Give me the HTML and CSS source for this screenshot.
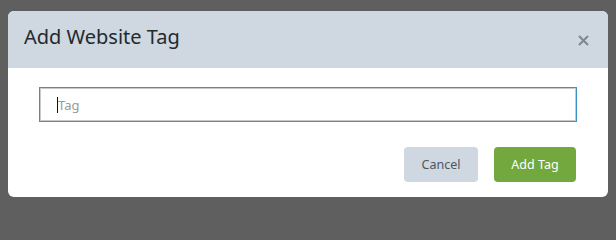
FILE: index.html
```html
<!DOCTYPE html>
<html>
<head>
<meta charset="utf-8">
<link rel="stylesheet" href="styles.css">
</head>
<body>
<div class="modal">
  <div class="modal-header">
    <h4 class="modal-title">Add Website Tag</h4>
    <button class="close" type="button" aria-label="Close">
      <svg width="11" height="11" viewBox="0 0 11 11"><path d="M1 1L10 10M10 1L1 10" stroke="#7d8691" stroke-width="2" stroke-linecap="butt"/></svg>
    </button>
  </div>
  <div class="modal-body">
    <div class="field">
      <input class="tag-input" type="text" placeholder="Tag">
      <span class="caret"></span>
    </div>
    <div class="actions">
      <button class="btn btn-cancel" type="button">Cancel</button>
      <button class="btn btn-add" type="button">Add Tag</button>
    </div>
  </div>
</div>
</body>
</html>
```
FILE: styles.css
```css
html, body {
  margin: 0;
  padding: 0;
  background: #5f5f5f;
  font-family: "Noto Sans", sans-serif;
}
body {
  padding: 11px 8px 0 8px;
}
.modal {
  width: 600px;
  height: 186px;
  background: #ffffff;
  border-radius: 6px;
  overflow: hidden;
  display: flex;
  flex-direction: column;
}
.modal-header {
  background: #cfd7e0;
  height: 57px;
  box-sizing: border-box;
  padding: 12px 19px 0 16px;
  display: flex;
  align-items: flex-start;
  justify-content: space-between;
}
.modal-title {
  margin: 0;
  font-size: 20px;
  line-height: 27px;
  font-weight: 400;
  color: #24292e;
}
.close {
  border: 0;
  background: transparent;
  padding: 0;
  margin-top: 12px;
  width: 11px;
  height: 11px;
  display: block;
}
.close svg { display: block; }
.modal-body {
  padding: 20px 32px 0 32px;
  display: flex;
  flex-direction: column;
}
.field {
  position: relative;
  width: 536px;
  height: 33px;
}
.tag-input {
  box-sizing: border-box;
  width: 536px;
  height: 33px;
  margin: 0;
  border: 1px solid #c9c9c9;
  box-shadow: 0 0 0 1px #3a92c6;
  outline: none;
  padding: 0 16px 0 17px;
  font-family: "Noto Sans", sans-serif;
  font-size: 13px;
  color: #333;
  display: block;
}
.tag-input::placeholder {
  color: #9a9a9a;
}
.caret {
  position: absolute;
  left: 17px;
  top: 9px;
  width: 1px;
  height: 16px;
  background: #111;
}
.actions {
  margin-top: 26px;
  display: flex;
  justify-content: flex-end;
  gap: 16px;
}
.btn {
  height: 35px;
  border: 0;
  border-radius: 4px;
  padding: 0;
  text-align: center;
  font-family: "Noto Sans", sans-serif;
  font-size: 12.5px;
  line-height: 35px;
}
.btn-cancel {
  width: 74px;
  background: #cfd7e0;
  color: #4b5663;
}
.btn-add {
  width: 82px;
  background: #72a83d;
  color: #ffffff;
}
```
